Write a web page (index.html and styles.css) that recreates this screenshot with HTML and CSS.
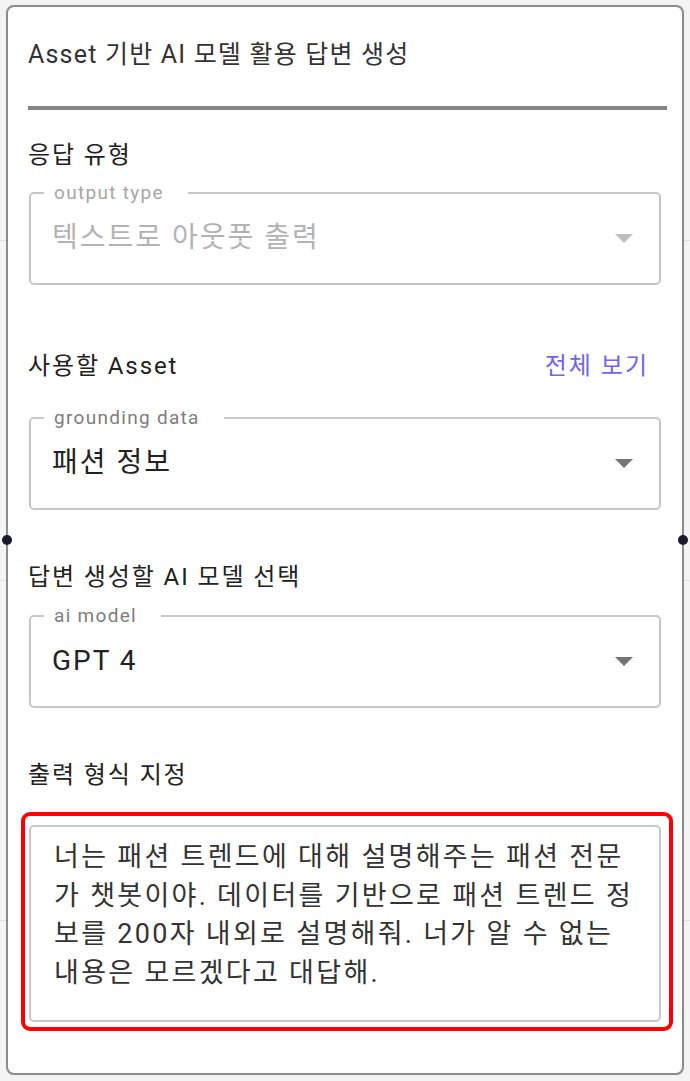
FILE: index.html
```html
<!DOCTYPE html>
<html lang="ko">
<head>
<meta charset="utf-8">
<title>Asset 기반 AI 모델 활용 답변 생성</title>
<link rel="stylesheet" href="styles.css">
</head>
<body>
<div class="canvas">
  <div class="card">
    <span class="handle handle-left"></span>
    <span class="handle handle-right"></span>

    <h1 class="title">Asset 기반 AI 모델 활용 답변 생성</h1>
    <div class="divider"></div>

    <div class="label-row lr-type"><span class="label">응답 유형</span></div>
    <fieldset class="field field-type is-disabled">
      <legend class="legend">output type</legend>
      <div class="field-row">
        <span class="value">텍스트로 아웃풋 출력</span>
        <svg class="arrow" width="18" height="9" viewBox="0 0 10 5"><path d="M0 0l5 5 5-5z"/></svg>
      </div>
    </fieldset>

    <div class="label-row lr-asset">
      <span class="label">사용할 Asset</span>
      <a class="link" href="#">전체 보기</a>
    </div>
    <fieldset class="field field-asset">
      <legend class="legend">grounding data</legend>
      <div class="field-row">
        <span class="value">패션 정보</span>
        <svg class="arrow" width="18" height="9" viewBox="0 0 10 5"><path d="M0 0l5 5 5-5z"/></svg>
      </div>
    </fieldset>

    <div class="label-row lr-model"><span class="label">답변 생성할 AI 모델 선택</span></div>
    <fieldset class="field field-model">
      <legend class="legend">ai model</legend>
      <div class="field-row">
        <span class="value">GPT 4</span>
        <svg class="arrow" width="18" height="9" viewBox="0 0 10 5"><path d="M0 0l5 5 5-5z"/></svg>
      </div>
    </fieldset>

    <div class="label-row lr-format"><span class="label">출력 형식 지정</span></div>
    <div class="prompt-wrap">
      <div class="prompt">너는 패션 트렌드에 대해 설명해주는 패션 전문<br>가 챗봇이야. 데이터를 기반으로 패션 트렌드 정<br>보를 200자 내외로 설명해줘. 너가 알 수 없는<br>내용은 모르겠다고 대답해.</div>
      <span class="highlight"></span>
    </div>
  </div>
</div>
</body>
</html>
```

FILE: styles.css
```css
html, body {
  margin: 0;
  padding: 0;
}

body {
  width: 690px;
  height: 1081px;
  overflow: hidden;
  background-color: #f4f4f4;
  background-image: linear-gradient(to bottom, #e2e2e2 0, #e2e2e2 1px, transparent 1px);
  background-size: 690px 340px;
  background-position: 0 240px;
  font-family: Roboto, "Noto Sans CJK KR", sans-serif;
  color: #222;
}

.canvas {
  padding: 5px 0 0 6px;
}

.card {
  position: relative;
  box-sizing: border-box;
  width: 678px;
  height: 1070px;
  background: #fff;
  border: 2px solid #8c8c8c;
  border-radius: 8px;
  padding: 0 15px 0 20px;
  box-shadow: 0 0 1px rgba(0, 0, 0, 0.15);
}

.handle {
  position: absolute;
  top: 528px;
  width: 10px;
  height: 10px;
  border-radius: 50%;
  background: #1a1a2e;
}

.handle-left { left: -6px; }
.handle-right { right: -6px; }

.title {
  margin: 0;
  padding-top: 33px;
  font-size: 25px;
  line-height: 30px;
  font-weight: 400;
  letter-spacing: 1.2px;
  color: #333;
}

.divider {
  margin-top: 36px;
  height: 4px;
  background: #858585;
}

.label-row {
  display: flex;
  justify-content: space-between;
  align-items: center;
  height: 30px;
  padding-right: 18px;
}

.label {
  font-size: 24px;
  line-height: 30px;
  letter-spacing: 1.9px;
  color: #222;
}

.link {
  font-size: 24px;
  line-height: 30px;
  letter-spacing: 2px;
  color: #6f63f2;
  text-decoration: none;
}

.lr-type { margin-top: 30px; }
.lr-asset { margin-top: 66px; }
.lr-model { margin-top: 52px; }
.lr-format { margin-top: 52px; }

.field {
  margin: 0 6px 0 1px;
  padding: 0 0 11px 0;
  border: 2px solid #c7c7c7;
  border-radius: 5px;
  min-width: 0;
}

.field-type { margin-top: 12px; }
.field-asset { margin-top: 26px; }
.field-model { margin-top: 13px; }

.legend {
  margin-left: 13px;
  padding: 0 24px 0 10px;
  font-size: 19px;
  line-height: 22px;
  letter-spacing: 1.3px;
  color: #7d7d7d;
}

.field-row {
  display: flex;
  align-items: center;
  justify-content: space-between;
  height: 68px;
  padding: 0 26px 0 21px;
}

.value {
  font-size: 28px;
  line-height: 34px;
  letter-spacing: 2px;
  color: #222;
}

.arrow {
  display: block;
  fill: #757575;
}

.is-disabled .legend { color: #a6a6a6; }
.is-disabled .value { color: #b3b3b3; }
.is-disabled .arrow { fill: #bdbdbd; }

.prompt-wrap {
  position: relative;
  margin: 35px 6px 0 1px;
}

.prompt {
  box-sizing: border-box;
  height: 197px;
  border: 2px solid #c7c7c7;
  border-radius: 5px;
  padding: 11px 8px 0 23px;
  font-size: 27px;
  line-height: 38.5px;
  letter-spacing: 2.3px;
  color: #333;
  white-space: nowrap;
}

.highlight {
  position: absolute;
  left: -8px;
  top: -13px;
  right: -12px;
  bottom: -9px;
  border: 4px solid #ff0000;
  border-radius: 9px;
  pointer-events: none;
}
```
